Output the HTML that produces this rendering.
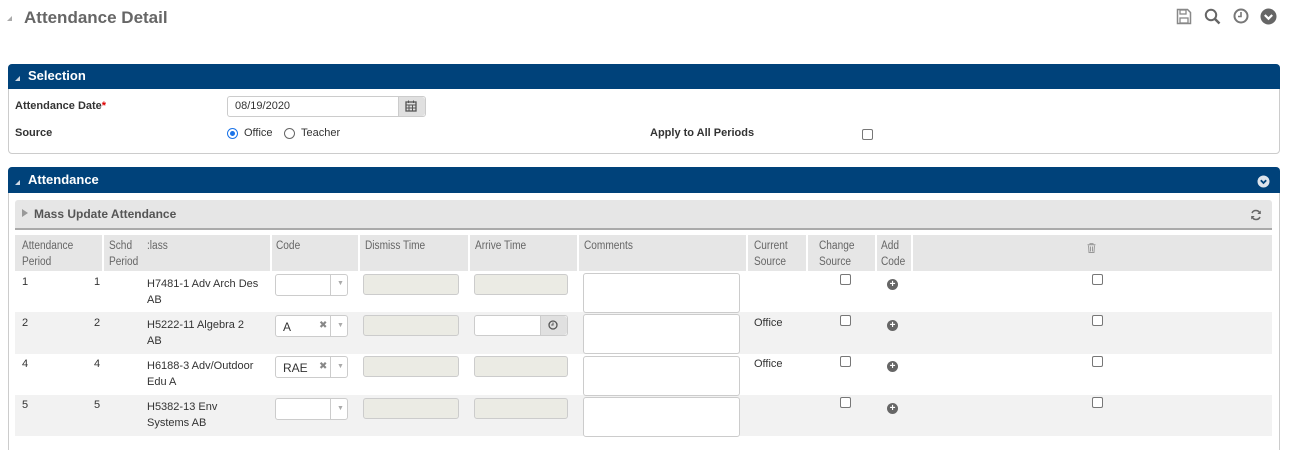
<!DOCTYPE html>
<html><head><meta charset="utf-8"><style>
*{box-sizing:border-box;margin:0;padding:0}
body{width:1289px;height:460px;background:#fff;font-family:"Liberation Sans",Arial,sans-serif;font-size:11px;color:#333;position:relative;overflow:hidden}
.a{position:absolute}
.tri{width:0;height:0;border-left:5px solid transparent;border-bottom:5px solid #999}
.hdr{background:#00427a;color:#fff;font-weight:bold;font-size:13px;border-radius:4px 4px 0 0}
.panel{border:1px solid #ccc;border-radius:4px}
.inp{border:1px solid #ccc;border-radius:3px;background:#fff}
.dis{border:1px solid #ccc;border-radius:3px;background:#ebebe4}
.cb{width:11px;height:11px;border:1px solid #777;border-radius:2px;background:#fff}
.th{color:#666;font-size:11.5px;line-height:16px;transform:scaleX(.88);transform-origin:left top}
.sep{background:#fff;width:2px;top:235px;height:36px}
.plus{width:11px;height:11px;border-radius:50%;background:#666;color:#fff;font-size:10px;line-height:11px;text-align:center;font-weight:bold}
</style></head><body>
<div class="a tri" style="left:7px;top:16px;border-bottom-color:#aaa"></div>
<div class="a" style="left:24px;top:8px;font-size:17px;font-weight:bold;color:#666">Attendance Detail</div>
<svg class="a" style="left:1176px;top:8px" width="16" height="17" viewBox="0 0 16 17"><path d="M1.5 1.5h10l3 3v11h-13z" fill="none" stroke="#888" stroke-width="1.5"/><rect x="4" y="2" width="6" height="4" fill="none" stroke="#888" stroke-width="1.3"/><rect x="4" y="10" width="8" height="5" fill="none" stroke="#888" stroke-width="1.3"/></svg>
<svg class="a" style="left:1204px;top:8px" width="17" height="17" viewBox="0 0 17 17"><circle cx="7" cy="7" r="5.2" fill="none" stroke="#666" stroke-width="2"/><path d="M11 11l4.5 4.5" stroke="#666" stroke-width="2.5"/></svg>
<svg class="a" style="left:1233px;top:8px" width="16" height="16" viewBox="0 0 16 16"><circle cx="8" cy="8" r="6.5" fill="none" stroke="#777" stroke-width="2"/><path d="M8 4v4.5H5" fill="none" stroke="#777" stroke-width="1.6"/></svg>
<svg class="a" style="left:1260px;top:8px" width="17" height="17" viewBox="0 0 17 17"><circle cx="8.5" cy="8.5" r="8" fill="#666"/><path d="M4.8 7l3.7 3.7L12.2 7" fill="none" stroke="#fff" stroke-width="2.2"/></svg>

<div class="a panel" style="left:8px;top:64px;width:1272px;height:90px"></div>
<div class="a hdr" style="left:8px;top:64px;width:1272px;height:25px;padding:4px 0 0 20px">Selection</div>
<div class="a tri" style="left:15px;top:76px;border-bottom-color:#cfd8e3"></div>
<div class="a" style="left:15px;top:100px;font-weight:bold">Attendance Date<span style="color:#d00">*</span></div>
<div class="a inp" style="left:227px;top:96px;width:199px;height:21px;padding:3px 0 0 7px">08/19/2020</div>
<div class="a" style="left:398px;top:97px;width:27px;height:19px;background:#e0e0e0;border-left:1px solid #ccc;border-radius:0 3px 3px 0"></div>
<svg class="a" style="left:405px;top:100px" width="12" height="12" viewBox="0 0 12 12"><rect x="1" y="2" width="10" height="9" fill="none" stroke="#555" stroke-width="1.3"/><path d="M1 5h10M4 5v6M7.5 5v6M1 8h10M3.5 0.5v2.5M8.5 0.5v2.5" stroke="#555" stroke-width="1"/></svg>
<div class="a" style="left:15px;top:127px;font-weight:bold">Source</div>
<div class="a" style="left:227px;top:128px;width:11px;height:11px;border-radius:50%;border:1px solid #1a73e8;background:#fff"><div style="margin:2px;width:5px;height:5px;border-radius:50%;background:#1a73e8"></div></div>
<div class="a" style="left:244px;top:127px">Office</div>
<div class="a" style="left:284px;top:128px;width:11px;height:11px;border-radius:50%;border:1px solid #666"></div>
<div class="a" style="left:301px;top:127px">Teacher</div>
<div class="a" style="left:650px;top:127px;font-weight:bold">Apply to All Periods</div>
<div class="a cb" style="left:862px;top:129px"></div>

<div class="a" style="left:8px;top:167px;width:1272px;height:283px;border:1px solid #ccc;border-bottom:none;border-radius:4px 4px 0 0"></div>
<div class="a hdr" style="left:8px;top:167px;width:1272px;height:26px;padding:5px 0 0 20px">Attendance</div>
<div class="a tri" style="left:15px;top:180px;border-bottom-color:#cfd8e3"></div>
<svg class="a" style="left:1257px;top:175px" width="13" height="13" viewBox="0 0 13 13"><circle cx="6.5" cy="6.5" r="6" fill="#dde4ec"/><path d="M3.8 5.3l2.7 2.7 2.7-2.7" fill="none" stroke="#00427a" stroke-width="1.8"/></svg>
<div class="a" style="left:15px;top:200px;width:1257px;height:30px;background:#e6e6e6;border-bottom:2px solid #aaa;border-radius:3px 3px 0 0"></div>
<div class="a" style="left:22px;top:209px;width:0;height:0;border-top:4px solid transparent;border-bottom:4px solid transparent;border-left:6px solid #999"></div>
<div class="a" style="left:34px;top:207px;font-weight:bold;font-size:12px;color:#555">Mass Update Attendance</div>
<svg class="a" style="left:1250px;top:209px" width="12" height="12" viewBox="0 0 12 12"><path d="M10 4.5A4.3 4.3 0 0 0 2 4M2 7.5A4.3 4.3 0 0 0 10 8" fill="none" stroke="#666" stroke-width="1.5"/><path d="M10.8 1.5v3.5H7.3zM1.2 10.5V7h3.5z" fill="#666"/></svg>

<div class="a" style="left:15px;top:235px;width:1257px;height:36px;background:#e6e6e6"></div>
<div class="a sep" style="left:102px"></div><div class="a sep" style="left:270px"></div><div class="a sep" style="left:358px"></div><div class="a sep" style="left:468px"></div><div class="a sep" style="left:577px"></div><div class="a sep" style="left:746px"></div><div class="a sep" style="left:806px"></div><div class="a sep" style="left:875px"></div><div class="a sep" style="left:911px"></div>
<div class="a th" style="left:22px;top:238px">Attendance<br>Period</div>
<div class="a th" style="left:109px;top:238px">Schd<br>Period</div>
<div class="a th" style="left:147px;top:238px">:lass</div>
<div class="a th" style="left:276px;top:238px">Code</div>
<div class="a th" style="left:365px;top:238px">Dismiss Time</div>
<div class="a th" style="left:475px;top:238px">Arrive Time</div>
<div class="a th" style="left:584px;top:238px">Comments</div>
<div class="a th" style="left:754px;top:238px">Current<br>Source</div>
<div class="a th" style="left:819px;top:238px">Change<br>Source</div>
<div class="a th" style="left:881px;top:238px">Add<br>Code</div>
<svg class="a" style="left:1087px;top:243px" width="9" height="10" viewBox="0 0 9 10"><path d="M0.5 1.8h8M3 1.8V0.6h3v1.2M1.5 2.5l.5 7h5l.5-7M3.5 3.5v5M5.5 3.5v5" fill="none" stroke="#999" stroke-width="1"/></svg>

<div class="a" style="left:15px;top:312px;width:1257px;height:42px;background:#f2f2f2"></div>
<div class="a" style="left:15px;top:395px;width:1257px;height:41px;background:#f2f2f2"></div>

<div class="a" style="left:22px;top:276px">1</div><div class="a" style="left:94px;top:276px">1</div>
<div class="a" style="left:147px;top:276px;line-height:16px">H7481-1 Adv Arch Des<br>AB</div>
<div class="a" style="left:22px;top:317px">2</div><div class="a" style="left:94px;top:317px">2</div>
<div class="a" style="left:147px;top:317px;line-height:16px">H5222-11 Algebra 2<br>AB</div>
<div class="a" style="left:22px;top:358px">4</div><div class="a" style="left:94px;top:358px">4</div>
<div class="a" style="left:147px;top:358px;line-height:16px">H6188-3 Adv/Outdoor<br>Edu A</div>
<div class="a" style="left:22px;top:399px">5</div><div class="a" style="left:94px;top:399px">5</div>
<div class="a" style="left:147px;top:399px;line-height:16px">H5382-13 Env<br>Systems AB</div>

<div class="a inp" style="left:275px;top:274px;width:73px;height:22px"></div>
<div class="a inp" style="left:275px;top:315px;width:73px;height:22px;padding:4px 0 0 7px;font-size:12px">A<span style="position:absolute;left:43px;top:4px;color:#888;font-size:10px">✖</span></div>
<div class="a inp" style="left:275px;top:356px;width:73px;height:22px;padding:4px 0 0 7px;font-size:12px">RAE<span style="position:absolute;left:43px;top:4px;color:#888;font-size:10px">✖</span></div>
<div class="a inp" style="left:275px;top:398px;width:73px;height:22px"></div>
<div class="a" style="left:330px;top:275px;width:1px;height:20px;background:#ccc"></div>
<div class="a" style="left:330px;top:316px;width:1px;height:20px;background:#ccc"></div>
<div class="a" style="left:330px;top:357px;width:1px;height:20px;background:#ccc"></div>
<div class="a" style="left:330px;top:399px;width:1px;height:20px;background:#ccc"></div>
<div class="a" style="left:337px;top:280px;font-size:7px;color:#aaa">▼</div>
<div class="a" style="left:337px;top:322px;font-size:7px;color:#aaa">▼</div>
<div class="a" style="left:337px;top:363px;font-size:7px;color:#aaa">▼</div>
<div class="a" style="left:337px;top:405px;font-size:7px;color:#aaa">▼</div>

<div class="a dis" style="left:363px;top:274px;width:96px;height:21px"></div>
<div class="a dis" style="left:474px;top:274px;width:94px;height:21px"></div>
<div class="a dis" style="left:363px;top:315px;width:96px;height:21px"></div>
<div class="a inp" style="left:474px;top:315px;width:94px;height:21px"></div>
<div class="a" style="left:540px;top:316px;width:27px;height:19px;background:#e0e0e0;border-left:1px solid #ccc;border-radius:0 3px 3px 0"></div>
<svg class="a" style="left:548px;top:320px" width="10" height="10" viewBox="0 0 10 10"><circle cx="5" cy="5" r="4" fill="none" stroke="#555" stroke-width="1.3"/><path d="M5 2.5V5H3.2" fill="none" stroke="#555" stroke-width="1"/></svg>
<div class="a dis" style="left:363px;top:356px;width:96px;height:21px"></div>
<div class="a dis" style="left:474px;top:356px;width:94px;height:21px"></div>
<div class="a dis" style="left:363px;top:398px;width:96px;height:21px"></div>
<div class="a dis" style="left:474px;top:398px;width:94px;height:21px"></div>

<div class="a inp" style="left:583px;top:273px;width:157px;height:40px"></div>
<div class="a inp" style="left:583px;top:314px;width:157px;height:40px"></div>
<div class="a inp" style="left:583px;top:356px;width:157px;height:40px"></div>
<div class="a inp" style="left:583px;top:397px;width:157px;height:40px"></div>

<div class="a" style="left:754px;top:317px">Office</div>
<div class="a" style="left:754px;top:358px">Office</div>

<div class="a cb" style="left:840px;top:274px"></div><div class="a plus" style="left:887px;top:279px">+</div><div class="a cb" style="left:1092px;top:274px"></div>
<div class="a cb" style="left:840px;top:315px"></div><div class="a plus" style="left:887px;top:320px">+</div><div class="a cb" style="left:1092px;top:315px"></div>
<div class="a cb" style="left:840px;top:356px"></div><div class="a plus" style="left:887px;top:361px">+</div><div class="a cb" style="left:1092px;top:356px"></div>
<div class="a cb" style="left:840px;top:397px"></div><div class="a plus" style="left:887px;top:403px">+</div><div class="a cb" style="left:1092px;top:397px"></div>
</body></html>
